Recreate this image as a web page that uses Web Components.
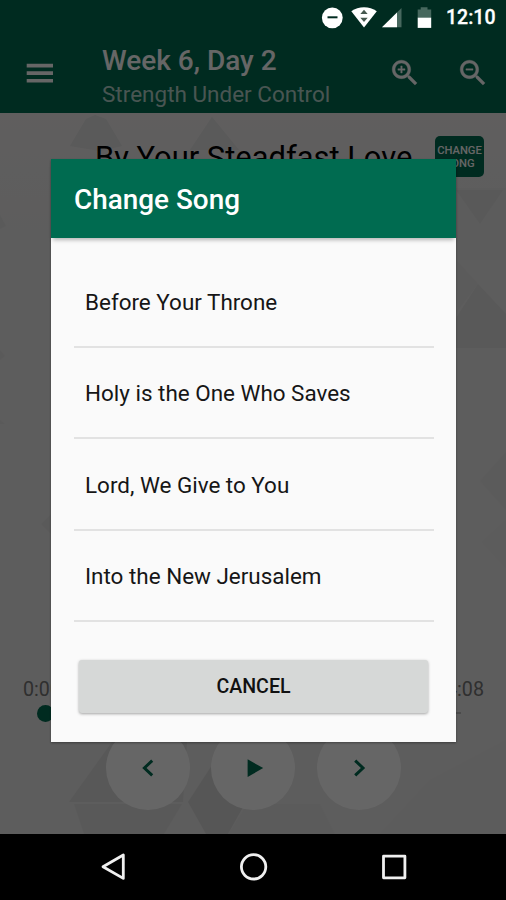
<!DOCTYPE html>
<html lang="en">
<head>
<meta charset="utf-8">
<title>Change Song</title>
<style>
html,body{margin:0;height:100%;background:#000}
body{font-family:Roboto,"Liberation Sans",sans-serif;overflow:hidden}
</style>
</head>
<body>
<phone-screen>
  <app-bar slot="app" heading="Week 6, Day 2" subheading="Strength Under Control"></app-bar>
  <song-player slot="app" song="By Your Steadfast Love" elapsed="0:00" total="4:08"></song-player>
  <status-bar slot="status" time="12:10"></status-bar>
  <song-dialog slot="dialog" heading="Change Song">
    <song-item>Before Your Throne</song-item>
    <song-item>Holy is the One Who Saves</song-item>
    <song-item>Lord, We Give to You</song-item>
    <song-item>Into the New Jerusalem</song-item>
    <raised-button slot="action">CANCEL</raised-button>
  </song-dialog>
  <nav-bar slot="nav"></nav-bar>
</phone-screen>
<script>
const define = (name, render) => customElements.define(name, class extends HTMLElement {
  connectedCallback() {
    if (this.shadowRoot) return;
    this.attachShadow({ mode: 'open' }).innerHTML = render(n => this.getAttribute(n) || '');
  }
});

define('phone-screen', () => `
<style>
:host{display:grid;grid-template-rows:834px 66px;width:506px;height:900px;position:relative;overflow:hidden}
.app{display:flex;flex-direction:column;min-height:0}
.scrim{position:absolute;inset:0 0 66px;background:rgba(0,0,0,.6)}
.status{position:absolute;top:0;right:0;left:0}
.overlay{position:absolute;inset:0 0 66px;padding:159px 50px 0 51px}
</style>
<div class="app"><slot name="app"></slot></div>
<slot name="nav"></slot>
<div class="scrim"></div>
<div class="status"><slot name="status"></slot></div>
<div class="overlay"><slot name="dialog"></slot></div>`);

define('status-bar', a => `
<style>
:host{display:flex;justify-content:flex-end;align-items:center;height:36px;padding-right:10px;color:#fff;box-sizing:border-box}
svg{display:block;flex:none}
span{font-size:19.5px;font-weight:500;line-height:38px;width:50px;white-space:nowrap;-webkit-text-stroke:.3px #fff}
</style>
<svg width="126" height="36" viewBox="320 0 126 36">
  <circle cx="332.3" cy="17.8" r="10.4" fill="#fff"/><path d="M327.5 17.3h10" stroke="#002b20" stroke-width="2"/>
  <path d="M351.3 11.2C358.5 5.8 369.5 5.8 376.8 11.2L364 27.4Z" fill="#fff"/>
  <path d="M360.3 14L364 9.8L367.7 14ZM360.3 17.8L364 22L367.7 17.8Z" fill="#46584f"/>
  <path d="M382 27.3L401.5 8V27.3Z" fill="#47685e"/><path d="M382 27.3L397 12.5V27.3Z" fill="#fff"/>
  <path d="M417.7 9.5h3V7.2h6.8v2.3h3.7V18h-13.5Z" fill="#47685e"/><path d="M417.7 17.7h13.5v10.2h-13.5Z" fill="#fff"/>
</svg>
<span>${a('time')}</span>`);

define('app-bar', a => `
<style>
:host{display:grid;grid-template-columns:76px 1fr auto;height:113px;padding:36px 16.5px 0 26px;box-sizing:border-box;background:#006b50;color:#fff;flex:none;position:relative;box-shadow:0 1px 3px rgba(0,0,0,.35)}
svg{display:block}
.menu{padding-top:27px}
h1{margin:8px 0 0;font-size:28px;line-height:33px;font-weight:500;white-space:nowrap}
p{margin:4px 0 0;font-size:22.5px;line-height:27px;color:rgba(255,255,255,.72);white-space:nowrap}
.tools{display:flex;gap:33.5px;padding-top:20px}
</style>
<svg class="menu" width="28" height="20" viewBox="0 0 28 20"><path d="M.7 2.6h26.3M.7 10.1h26.3M.7 17.7h26.3" stroke="#fff" stroke-width="3.6"/></svg>
<div><h1>${a('heading')}</h1><p>${a('subheading')}</p></div>
<div class="tools">
  ${['<path d="M12 10h-2v2H9v-2H7V9h2V7h1v2h2v1z"/>', '<path d="M7 9h5v1H7z"/>'].map(g => `
  <svg width="34" height="34" viewBox="0 0 24 24" fill="#fff" stroke="#fff" stroke-width=".3"><path d="M15.5 14h-.79l-.28-.27C15.41 12.59 16 11.11 16 9.5 16 5.91 13.09 3 9.5 3S3 5.91 3 9.5 5.91 16 9.5 16c1.61 0 3.09-.59 4.23-1.57l.27.28v.79l5 4.99L20.49 19l-4.99-5zm-6 0C7.01 14 5 11.99 5 9.5S7.01 5 9.5 5 14 7.01 14 9.5 11.99 14 9.5 14z"/>${g}</svg>`).join('')}
</div>`);

define('song-player', a => `
<style>
:host{display:flex;flex-direction:column;flex:1;min-height:0;background:#e9e8e8;position:relative;overflow:hidden;isolation:isolate}
.bg{position:absolute;inset:0;z-index:-1}
.top{display:flex;justify-content:space-between;padding:23px 22px 0 95px}
h2{margin:3px 0 0;font-size:30.9px;line-height:37px;font-weight:400;color:#000;white-space:nowrap}
.change{width:49px;height:41px;box-sizing:border-box;padding-top:8px;border-radius:5px;background:#006b50;color:#fff;font-size:11.2px;line-height:13px;font-weight:500;text-align:center;margin:0}
.times{display:flex;justify-content:space-between;margin-top:500px;padding:0 22px 0 23px;font-size:19.7px;line-height:25px;height:24px;color:#777}
.seek{display:flex;align-items:center;height:18px;margin-top:3px;padding:0 45px 0 37px}
.knob{width:17px;height:17px;border-radius:50%;background:#006b50}
.track{flex:1;height:2px;background:#bbb}
.controls{display:flex;justify-content:center;gap:21.5px;margin-top:4px}
.controls svg{display:block;width:84px;height:84px;border-radius:50%;background:#fff}
</style>
<svg class="bg" width="506" height="721" viewBox="0 113 506 721">
  <defs><linearGradient id="fade" x1="0" y1="0" x2="0" y2="1"><stop offset="0" stop-color="#efecec"/><stop offset="1" stop-color="#e9e8e8"/></linearGradient></defs>
  <path d="M0 113H506V230H0Z" fill="url(#fade)"/>
  <path d="M70 146L86 119L95 115L106 119L122 146L100 151Z" fill="#e0e0e0"/>
  <path d="M190 150L212 117L239 150Z" fill="#e0e0e0"/>
  <path d="M456 188H506V260H456Z" fill="#e6e6e6"/>
  <path d="M456 190H503L480 224Z" fill="#dfdfdf"/>
  <path d="M456 318L478 284L506 314V348H456Z" fill="#dedede"/>
  <path d="M456 260L478 284L458 310Z" fill="#e3e3e3"/>
  <path d="M506 452L480 481L506 510Z" fill="#e4e4e4"/>
  <path d="M506 520L482 542L506 568Z" fill="#e5e5e5"/>
  <path d="M0 215L6 226L0 229ZM0 350L5 356L0 360ZM0 420L5 424H0ZM51 514L41 524L51 534Z" fill="#e2e2e2"/>
  <path d="M112 742L69 802H183L187 742Z" fill="#dcdcdc"/>
  <path d="M74 804H182L164 834H84Z" fill="#dfdfdf"/>
  <path d="M214 762L188 802L206 834H228L247 800Z" fill="#d8d8d8"/>
  <path d="M247 804H320L335 834H228Z" fill="#e4e4e4"/>
  <path d="M380 834L430 780L506 740V834Z" fill="#e7e5e5"/>
</svg>
<div class="top"><h2>${a('song')}</h2><p class="change">CHANGE<br>SONG</p></div>
<div class="times"><span>${a('elapsed')}</span><span>${a('total')}</span></div>
<div class="seek"><span class="knob"></span><span class="track"></span></div>
<div class="controls">
  <svg viewBox="0 0 84 84"><path d="M46.2 34.6L38.4 42L46.2 49.4" fill="none" stroke="#006b50" stroke-width="3"/></svg>
  <svg viewBox="0 0 84 84"><path d="M36.6 33.3V51L52.2 42.1Z" fill="#006b50"/></svg>
  <svg viewBox="0 0 84 84"><path d="M38.2 34.6L46 42L38.2 49.4" fill="none" stroke="#006b50" stroke-width="3"/></svg>
</div>`);

define('song-dialog', a => `
<style>
:host{display:flex;flex-direction:column;height:583px;background:#fafafa;box-shadow:0 1px 2px rgba(0,0,0,.35)}
header{height:79px;flex:none;box-sizing:border-box;padding:24px 23px 0;background:#006b50;color:#fff;font-size:27.9px;line-height:33px;font-weight:500;white-space:nowrap;box-shadow:0 4px 4px -2px rgba(0,0,0,.28)}
.list{padding:18px 22px 0 23px}
.action{padding:38px 28px 0}
</style>
<header>${a('heading')}</header>
<div class="list"><slot></slot></div>
<div class="action"><slot name="action"></slot></div>`);

define('song-item', () => `
<style>
:host{display:flex;align-items:center;height:91.5px;box-sizing:border-box;padding:2px 11px 0;border-bottom:2px solid #e2e2e2;font-size:22.45px;line-height:28px;color:#161616;white-space:nowrap}
</style><slot></slot>`);

define('raised-button', () => `
<style>
:host{display:flex;align-items:center;justify-content:center;height:53px;border-radius:3px;background:#d6d8d7;box-shadow:0 1px 3px rgba(0,0,0,.35);font-size:19.6px;font-weight:500;color:#111}
</style><slot></slot>`);

define('nav-bar', () => `
<style>
:host{display:flex;justify-content:center;background:#000;position:relative}
svg{display:block}
</style>
<svg width="506" height="66" viewBox="0 834 506 66" fill="none" stroke="#f0f0f0" stroke-width="2.8" stroke-linejoin="round">
  <path d="M123.3 855V878.4L103 866.8Z"/><circle cx="253.6" cy="866.8" r="12.2"/><rect x="383.5" y="856.2" width="21.4" height="21.6"/>
</svg>`);
</script>
</body>
</html>
